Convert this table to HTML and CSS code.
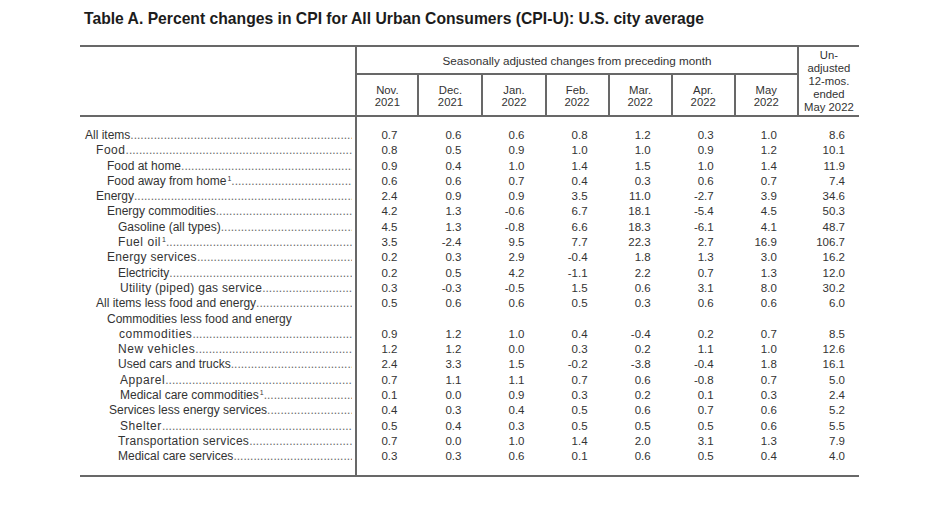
FILE: index.html
```html
<!DOCTYPE html>
<html lang="en">
<head>
<meta charset="utf-8">
<title>Table A. Percent changes in CPI</title>
<link rel="stylesheet" href="styles.css">
</head>
<body>
<div class="page">
  <h1 class="title">Table A. Percent changes in CPI for All Urban Consumers (CPI-U): U.S. city average</h1>
  <table class="cpi">
    <colgroup>
      <col class="c-label">
      <col class="c-m1"><col class="c-m2"><col class="c-m"><col class="c-m"><col class="c-m"><col class="c-m"><col class="c-m">
      <col class="c-u">
    </colgroup>
    <thead>
      <tr>
        <th class="blank" rowspan="2"></th>
        <th class="group" colspan="7">Seasonally adjusted changes from preceding month</th>
        <th class="unadj" rowspan="2">Un-<br>adjusted<br>12-mos.<br>ended<br>May 2022</th>
      </tr>
      <tr>
        <th class="m">Nov.<br>2021</th>
        <th class="m">Dec.<br>2021</th>
        <th class="m">Jan.<br>2022</th>
        <th class="m">Feb.<br>2022</th>
        <th class="m">Mar.<br>2022</th>
        <th class="m">Apr.<br>2022</th>
        <th class="m">May<br>2022</th>
      </tr>
    </thead>
    <tbody>
      <tr class="first"><td class="lbl i0"><div class="lead"><span>All items</span></div></td><td>0.7</td><td>0.6</td><td>0.6</td><td>0.8</td><td>1.2</td><td>0.3</td><td>1.0</td><td>8.6</td></tr>
      <tr><td class="lbl i1"><div class="lead sp"><span>Food</span></div></td><td>0.8</td><td>0.5</td><td>0.9</td><td>1.0</td><td>1.0</td><td>0.9</td><td>1.2</td><td>10.1</td></tr>
      <tr><td class="lbl i2"><div class="lead"><span>Food at home</span></div></td><td>0.9</td><td>0.4</td><td>1.0</td><td>1.4</td><td>1.5</td><td>1.0</td><td>1.4</td><td>11.9</td></tr>
      <tr><td class="lbl i2"><div class="lead"><span>Food away from home<sup class="fn">1</sup></span></div></td><td>0.6</td><td>0.6</td><td>0.7</td><td>0.4</td><td>0.3</td><td>0.6</td><td>0.7</td><td>7.4</td></tr>
      <tr><td class="lbl i1"><div class="lead"><span>Energy</span></div></td><td>2.4</td><td>0.9</td><td>0.9</td><td>3.5</td><td>11.0</td><td>-2.7</td><td>3.9</td><td>34.6</td></tr>
      <tr><td class="lbl i2"><div class="lead"><span>Energy commodities</span></div></td><td>4.2</td><td>1.3</td><td>-0.6</td><td>6.7</td><td>18.1</td><td>-5.4</td><td>4.5</td><td>50.3</td></tr>
      <tr><td class="lbl i3"><div class="lead"><span>Gasoline (all types)</span></div></td><td>4.5</td><td>1.3</td><td>-0.8</td><td>6.6</td><td>18.3</td><td>-6.1</td><td>4.1</td><td>48.7</td></tr>
      <tr><td class="lbl i3"><div class="lead sp"><span>Fuel oil<sup class="fn">1</sup></span></div></td><td>3.5</td><td>-2.4</td><td>9.5</td><td>7.7</td><td>22.3</td><td>2.7</td><td>16.9</td><td>106.7</td></tr>
      <tr><td class="lbl i2"><div class="lead sp-s"><span>Energy services</span></div></td><td>0.2</td><td>0.3</td><td>2.9</td><td>-0.4</td><td>1.8</td><td>1.3</td><td>3.0</td><td>16.2</td></tr>
      <tr><td class="lbl i3"><div class="lead"><span>Electricity</span></div></td><td>0.2</td><td>0.5</td><td>4.2</td><td>-1.1</td><td>2.2</td><td>0.7</td><td>1.3</td><td>12.0</td></tr>
      <tr><td class="lbl i3b"><div class="lead sp-s"><span>Utility (piped) gas service</span></div></td><td>0.3</td><td>-0.3</td><td>-0.5</td><td>1.5</td><td>0.6</td><td>3.1</td><td>8.0</td><td>30.2</td></tr>
      <tr><td class="lbl i1"><div class="lead"><span>All items less food and energy</span></div></td><td>0.5</td><td>0.6</td><td>0.6</td><td>0.5</td><td>0.3</td><td>0.6</td><td>0.6</td><td>6.0</td></tr>
      <tr class="wrap"><td class="lbl i2"><div class="line1">Commodities less food and energy</div><div class="lead hang sp"><span>commodities</span></div></td><td>0.9</td><td>1.2</td><td>1.0</td><td>0.4</td><td>-0.4</td><td>0.2</td><td>0.7</td><td>8.5</td></tr>
      <tr><td class="lbl i3"><div class="lead sp"><span>New vehicles</span></div></td><td>1.2</td><td>1.2</td><td>0.0</td><td>0.3</td><td>0.2</td><td>1.1</td><td>1.0</td><td>12.6</td></tr>
      <tr><td class="lbl i3"><div class="lead"><span>Used cars and trucks</span></div></td><td>2.4</td><td>3.3</td><td>1.5</td><td>-0.2</td><td>-3.8</td><td>-0.4</td><td>1.8</td><td>16.1</td></tr>
      <tr><td class="lbl i3b"><div class="lead sp"><span>Apparel</span></div></td><td>0.7</td><td>1.1</td><td>1.1</td><td>0.7</td><td>0.6</td><td>-0.8</td><td>0.7</td><td>5.0</td></tr>
      <tr><td class="lbl i3b"><div class="lead"><span>Medical care commodities<sup class="fn">1</sup></span></div></td><td>0.1</td><td>0.0</td><td>0.9</td><td>0.3</td><td>0.2</td><td>0.1</td><td>0.3</td><td>2.4</td></tr>
      <tr><td class="lbl i2b"><div class="lead"><span>Services less energy services</span></div></td><td>0.4</td><td>0.3</td><td>0.4</td><td>0.5</td><td>0.6</td><td>0.7</td><td>0.6</td><td>5.2</td></tr>
      <tr><td class="lbl i3b"><div class="lead sp"><span>Shelter</span></div></td><td>0.5</td><td>0.4</td><td>0.3</td><td>0.5</td><td>0.5</td><td>0.5</td><td>0.6</td><td>5.5</td></tr>
      <tr><td class="lbl i3"><div class="lead sp-s"><span>Transportation services</span></div></td><td>0.7</td><td>0.0</td><td>1.0</td><td>1.4</td><td>2.0</td><td>3.1</td><td>1.3</td><td>7.9</td></tr>
      <tr class="last"><td class="lbl i3"><div class="lead"><span>Medical care services</span></div></td><td>0.3</td><td>0.3</td><td>0.6</td><td>0.1</td><td>0.6</td><td>0.5</td><td>0.4</td><td>4.0</td></tr>
    </tbody>
  </table>
</div>
</body>
</html>
```

FILE: styles.css
```css
html, body {
  margin: 0;
  padding: 0;
  background: #ffffff;
}

body {
  font-family: "Liberation Sans", Arial, sans-serif;
  color: #333333;
}

.page {
  padding: 9px 0 0 80px;
}

.title {
  margin: 0 0 16px 4px;
  font-size: 15.7px;
  line-height: 20px;
  font-weight: bold;
  color: #1c1c1c;
}

.cpi {
  border-collapse: collapse;
  table-layout: fixed;
  width: 779px;
  font-size: 11.5px;
}

.c-label { width: 276px; }
.c-m1 { width: 62px; }
.c-m2 { width: 64px; }
.c-m { width: 63px; }
.c-u { width: 61px; }

.cpi th {
  padding: 0;
  font-weight: normal;
  font-size: 11.3px;
  color: #333333;
  text-align: center;
  vertical-align: middle;
  border-bottom: 2px solid #686868;
}

.cpi thead tr:first-child th {
  border-top: 2px solid #686868;
}

.cpi th.blank {
  border-right: 2px solid #686868;
}

.cpi th.group {
  height: 26px;
  font-size: 11.7px;
}

.cpi th.m {
  height: 38px;
  line-height: 12.5px;
  padding-top: 2px;
  border-left: 2px solid #686868;
}

.cpi th.unadj {
  line-height: 13px;
  border-left: 2px solid #686868;
}

.cpi td {
  padding: 0 21px 0 0;
  line-height: 15.3px;
  text-align: right;
  vertical-align: bottom;
  white-space: nowrap;
}

.cpi td:last-child {
  padding-right: 14px;
}

.cpi td.lbl {
  font-size: 12px;
  text-align: left;
  padding-right: 3px;
  border-right: 2px solid #686868;
}

.cpi tr.first td {
  padding-top: 11px;
}

.cpi tr.last td {
  padding-bottom: 10px;
  border-bottom: 2px solid #686868;
}

.cpi td.i0 { padding-left: 5px; }
.cpi td.i1 { padding-left: 16px; }
.cpi td.i2 { padding-left: 27px; }
.cpi td.i2b { padding-left: 29px; }
.cpi td.i3 { padding-left: 38px; }
.cpi td.i3b { padding-left: 40px; }

.lead {
  display: flex;
  white-space: nowrap;
}

.lead::after {
  content: "..............................................................................................................................................";
  flex: 1 1 0;
  min-width: 0;
  overflow: hidden;
  color: #6a6a6a;
  letter-spacing: 0;
}

.hang {
  padding-left: 12px;
}

.sp { letter-spacing: 0.55px; }
.sp-s { letter-spacing: 0.3px; }

.fn {
  font-size: 7px;
  line-height: 0;
  vertical-align: 4px;
  letter-spacing: 0;
  margin-left: 1px;
}
```
